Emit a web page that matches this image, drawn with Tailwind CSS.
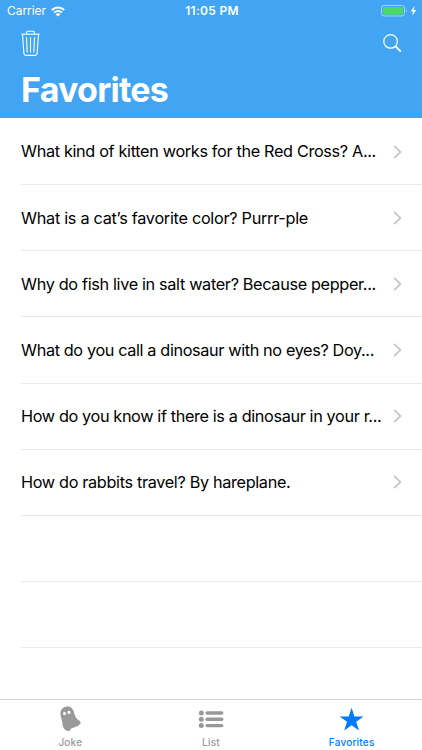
<!DOCTYPE html>
<html lang="en">
<head>
    <meta charset="UTF-8">
    <meta name="viewport" content="width=device-width, initial-scale=1.0">
    <title>Favorites</title>
    <script src="https://cdn.jsdelivr.net/npm/@tailwindcss/browser@4"></script>
</head>
<body class="bg-white font-['Inter',sans-serif] text-black">
    <div class="w-[422px] h-[750px] flex flex-col overflow-hidden">

        <!-- Header -->
        <header class="h-[118px] shrink-0 bg-[#41a5f4] text-white flex flex-col">
            <!-- Status bar -->
            <div class="h-[22px] grid grid-cols-3 items-center pl-[7px] pr-[5px] text-xs">
                <div class="flex items-center gap-[5px]">
                    <span class="text-[12px] tracking-[-0.05px]">Carrier</span>
                    <svg class="w-[14px] h-[11px]" viewBox="0 0 14 11" fill="none" stroke="#fff" stroke-width="2">
                        <path d="M0.8 4.1C4.3 0.7 9.7 0.7 13.2 4.1"></path>
                        <path d="M3.1 6.5C5.3 4.4 8.7 4.4 10.9 6.5"></path>
                        <path fill="#fff" stroke="none" d="M7 10.6L4.6 8.2C6 7 8 7 9.4 8.2Z"></path>
                    </svg>
                </div>
                <span class="text-center font-semibold text-[12px] tracking-[0.3px]">11:05 PM</span>
                <div class="flex items-center justify-end">
                    <svg class="w-[36px] h-[12px]" viewBox="0 0 36 12">
                        <rect x="0.5" y="0.5" width="23" height="10.5" rx="2.5" fill="none" stroke="#a5d4fa"></rect>
                        <rect x="2" y="2" width="20" height="7.5" rx="1" fill="#4cd964"></rect>
                        <path d="M25 4C26.3 4.6 26.3 6.9 25 7.5Z" fill="#a5d4fa"></path>
                        <path d="M33.6 0.8L29.6 6.4H32L31.2 10.8L35.2 5H32.8Z" fill="#fff"></path>
                    </svg>
                </div>
            </div>

            <!-- Toolbar -->
            <div class="h-[42px] flex items-center justify-between pl-[21px] pr-[20px]">
                <svg class="w-[19px] h-[27px]" viewBox="0 0 19 27" fill="none" stroke="#fff" stroke-width="1.1">
                    <path d="M0.3 4.2H18.7"></path>
                    <path d="M5.6 4V2.3Q5.6 1.2 6.7 1.2H12.3Q13.4 1.2 13.4 2.3V4"></path>
                    <path d="M1.5 4.2L2.9 23.4Q3.1 25.4 4.9 25.4H14.1Q15.9 25.4 16.1 23.4L17.5 4.2"></path>
                    <path d="M5.5 7L6.2 22.5M9.5 7V22.5M13.5 7L12.8 22.5"></path>
                </svg>
                <svg class="w-[19px] h-[19px]" viewBox="0 0 19 19" fill="none" stroke="#fff">
                    <circle cx="7.6" cy="7.4" r="6.8" stroke-width="1.2"></circle>
                    <path d="M12.6 12.4L17.8 17.6" stroke-width="2"></path>
                </svg>
            </div>

            <h1 class="pl-[21px] mt-[5px] text-[34px] leading-[42px] font-bold tracking-[-0.75px]">Favorites</h1>
        </header>

        <!-- Jokes list -->
        <main class="flex-1 overflow-hidden">
            <ul class="pl-[21px] pt-px text-[16.25px] tracking-[-0.34px]">
                <li class="h-[66.15px] flex items-center justify-between pr-[20px] border-b border-[#e9e9eb]">
                    <span class="whitespace-nowrap">What kind of kitten works for the Red Cross? A...</span>
                    <svg class="w-[9px] h-[14px] shrink-0" viewBox="0 0 9 14" fill="none" stroke="#c7c7cc" stroke-width="1.9"><path d="M1.2 0.8L7.4 7L1.2 13.2"></path></svg>
                </li>
                <li class="h-[66.15px] flex items-center justify-between pr-[20px] border-b border-[#e9e9eb]">
                    <span class="whitespace-nowrap tracking-[-0.29px]">What is a cat’s favorite color? Purrr-ple</span>
                    <svg class="w-[9px] h-[14px] shrink-0" viewBox="0 0 9 14" fill="none" stroke="#c7c7cc" stroke-width="1.9"><path d="M1.2 0.8L7.4 7L1.2 13.2"></path></svg>
                </li>
                <li class="h-[66.15px] flex items-center justify-between pr-[20px] border-b border-[#e9e9eb]">
                    <span class="whitespace-nowrap">Why do fish live in salt water? Because pepper...</span>
                    <svg class="w-[9px] h-[14px] shrink-0" viewBox="0 0 9 14" fill="none" stroke="#c7c7cc" stroke-width="1.9"><path d="M1.2 0.8L7.4 7L1.2 13.2"></path></svg>
                </li>
                <li class="h-[66.15px] flex items-center justify-between pr-[20px] border-b border-[#e9e9eb]">
                    <span class="whitespace-nowrap tracking-[-0.37px]">What do you call a dinosaur with no eyes? Doy...</span>
                    <svg class="w-[9px] h-[14px] shrink-0" viewBox="0 0 9 14" fill="none" stroke="#c7c7cc" stroke-width="1.9"><path d="M1.2 0.8L7.4 7L1.2 13.2"></path></svg>
                </li>
                <li class="h-[66.15px] flex items-center justify-between pr-[20px] border-b border-[#e9e9eb]">
                    <span class="whitespace-nowrap tracking-[-0.37px]">How do you know if there is a dinosaur in your r...</span>
                    <svg class="w-[9px] h-[14px] shrink-0" viewBox="0 0 9 14" fill="none" stroke="#c7c7cc" stroke-width="1.9"><path d="M1.2 0.8L7.4 7L1.2 13.2"></path></svg>
                </li>
                <li class="h-[66.15px] flex items-center justify-between pr-[20px] border-b border-[#e9e9eb]">
                    <span class="whitespace-nowrap">How do rabbits travel? By hareplane.</span>
                    <svg class="w-[9px] h-[14px] shrink-0" viewBox="0 0 9 14" fill="none" stroke="#c7c7cc" stroke-width="1.9"><path d="M1.2 0.8L7.4 7L1.2 13.2"></path></svg>
                </li>
                <!-- Empty rows -->
                <li class="h-[66.15px] border-b border-[#e9e9eb]"></li>
                <li class="h-[66.15px] border-b border-[#e9e9eb]"></li>
            </ul>
        </main>

        <!-- Tab bar -->
        <nav class="h-[51px] shrink-0 grid grid-cols-3 border-t border-[#d2d2d4] text-[10px] leading-[12px] font-medium tracking-[0.2px] text-[#999]">
            <a class="flex flex-col items-center pt-[6px] gap-[4px]">
                <svg class="w-[21px] h-[26px]" viewBox="0 0 21 26">
                    <path fill="#999" d="M6.5 0.6C10 -0.1 12.8 2.2 13.7 5.2C14.6 8.2 15 10.6 16.9 12.8C18.2 14.3 20.4 15 20.7 16.6C20.8 17.8 19.4 18.3 18.7 19.2C17.8 20.4 17 20.2 15.8 20.7C14.4 21.4 13.6 21.7 12.3 21.9C11 22.3 10.8 23 9.9 24.3C9.2 25.4 8.2 25.5 7.2 24.8C5.8 24.4 4.8 23.6 4.1 22.4C3 21.4 2.7 20.3 2.6 18.5C2.4 16.4 2.1 14.6 1.4 12.6C0.7 10.2 0.2 8.4 0.6 5.9C1.1 3 3.4 1.2 6.5 0.6Z"></path>
                    <ellipse cx="4.5" cy="7.5" rx="1.4" ry="1.7" fill="#fff"></ellipse>
                    <ellipse cx="9" cy="6.4" rx="1.5" ry="1.7" fill="#fff"></ellipse>
                </svg>
                <span>Joke</span>
            </a>
            <a class="flex flex-col items-center pt-[6px] gap-[4px]">
                <svg class="w-[26px] h-[26px]" viewBox="0 0 26 26" fill="#999">
                    <circle cx="3.3" cy="7" r="2.5"></circle>
                    <circle cx="3.3" cy="13.3" r="2.5"></circle>
                    <circle cx="3.3" cy="19.6" r="2.5"></circle>
                    <rect x="7.4" y="5.3" width="18" height="3.4" rx="1.7"></rect>
                    <rect x="7.4" y="11.6" width="18" height="3.4" rx="1.7"></rect>
                    <rect x="7.4" y="17.9" width="18" height="3.4" rx="1.7"></rect>
                </svg>
                <span>List</span>
            </a>
            <a class="flex flex-col items-center pt-[6px] gap-[4px] text-[#007aff]">
                <svg class="w-[26px] h-[26px]" viewBox="0 0 26 26">
                    <path fill="#007aff" d="M12.6 1.8L15.4 10.4H24.6L17.2 15.8L20 24.5L12.6 19.2L5.2 24.5L8 15.8L0.6 10.4H9.8Z"></path>
                </svg>
                <span>Favorites</span>
            </a>
        </nav>
    </div>
</body>
</html>
